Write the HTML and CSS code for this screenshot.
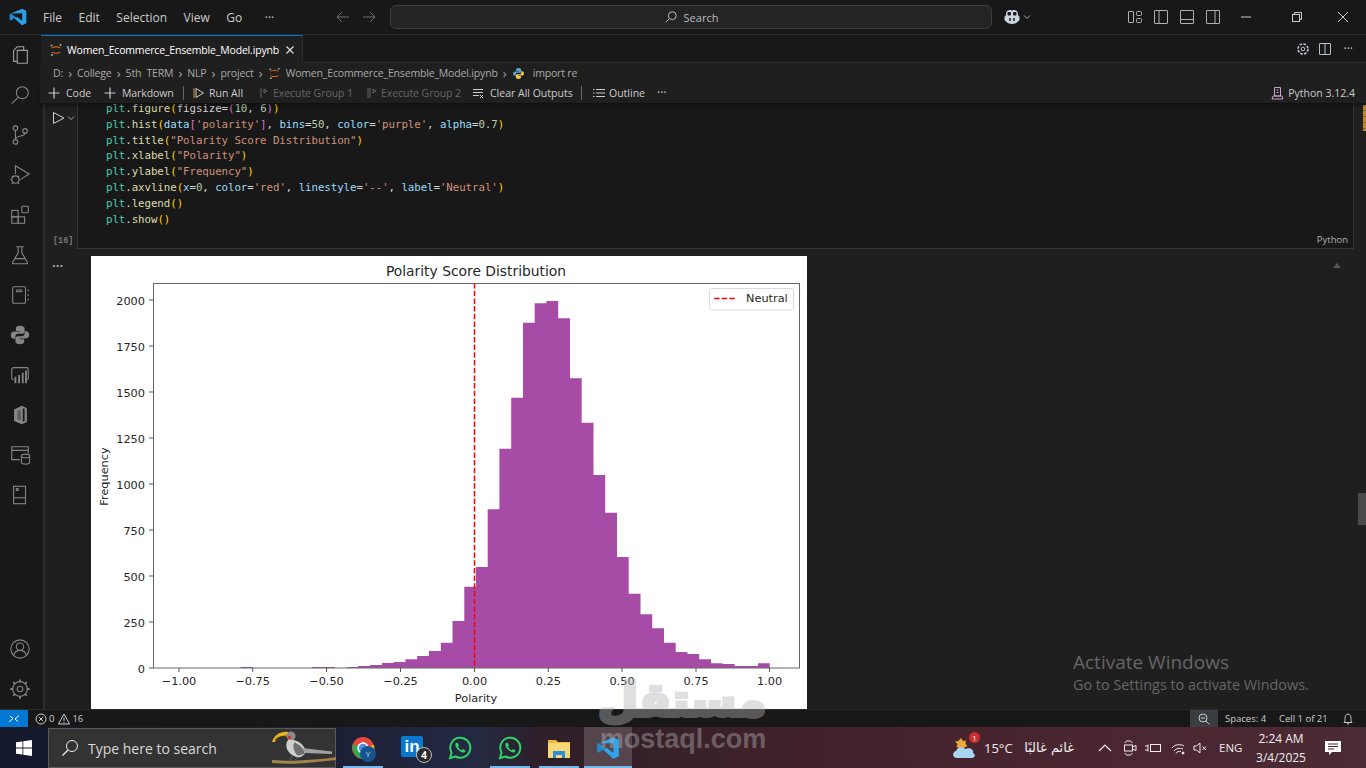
FILE: index.html
```html
<!DOCTYPE html>
<html>
<head>
<title>Women_Ecommerce_Ensemble_Model.ipynb</title>
<link rel="stylesheet" href="styles.css">
</head>
<body>

<!-- title bar -->
<div class="titlebar">
  <svg class="vs-logo" width="20" height="20" viewBox="0 0 24 24"><path fill="#1f8ad2" d="M2 8.500 3.500 7.700 17 18v4L7.500 13.300 3.500 16.300 2 15.500z"/><path fill="#2a9fe8" d="M17 2l5 2.500v15L17 22l-9.500-8.700L11 12l6 4.500v-9L3.500 7.700 2 8.500 17 2z"/></svg>
  <div class="menu"><span>File</span><span>Edit</span><span>Selection</span><span>View</span><span>Go</span><span class="menu-more">···</span></div>
  <div class="nav-arrows">
    <svg width="16" height="16" viewBox="0 0 16 16"><path d="M14 8H2M7 3 2 8l5 5" fill="none" stroke="#6f6f6f"/></svg>
    <svg width="16" height="16" viewBox="0 0 16 16"><path d="M2 8h12M9 3l5 5-5 5" fill="none" stroke="#6f6f6f"/></svg>
  </div>
  <div class="searchbox">
    <svg width="14" height="14" viewBox="0 0 16 16"><circle cx="9.500" cy="6.500" r="4.500" fill="none" stroke="#ccc"/><path d="M6 10l-4 4" stroke="#ccc"/></svg>
    <span>Search</span>
  </div>
  <svg class="copilot" width="18" height="18" viewBox="0 0 18 18"><path fill="#ccd6e0" d="M3 6c0-3 2-4 4-4 1 0 1.600.4 2 1 .4-.6 1-1 2-1 2 0 4 1 4 4v1l1.500 2v3C14 15 11.500 16 9 16s-5-1-7.500-4V9L3 7z"/><rect x="4.500" y="4" width="3.500" height="3.500" rx="1" fill="#181818"/><rect x="10" y="4" width="3.500" height="3.500" rx="1" fill="#181818"/><path d="M7 10v3M11 10v3" stroke="#181818" stroke-width="1.500"/></svg>
  <svg class="copilot-chev" width="10" height="10" viewBox="0 0 10 10"><path d="M2 3.500 5 6.500 8 3.500" fill="none" stroke="#aaa"/></svg>
  <div class="layout-icons">
    <svg width="16" height="16" viewBox="0 0 16 16" fill="none" stroke="#b0b0b0"><rect x="1.500" y="2.500" width="5" height="11" rx=".5"/><rect x="9.500" y="2.500" width="5" height="4" rx="1"/><rect x="9.500" y="9.500" width="5" height="4" rx="1"/></svg>
    <svg width="16" height="16" viewBox="0 0 16 16" fill="none" stroke="#b0b0b0"><rect x="1.500" y="1.500" width="13" height="13" rx=".5"/><path d="M6 2v12"/></svg>
    <svg width="16" height="16" viewBox="0 0 16 16" fill="none" stroke="#b0b0b0"><rect x="1.500" y="1.500" width="13" height="13" rx=".5"/><path d="M2 10.500h12"/></svg>
    <svg width="16" height="16" viewBox="0 0 16 16" fill="none" stroke="#b0b0b0"><rect x="1.500" y="1.500" width="13" height="13" rx=".5"/><path d="M10 2v12"/></svg>
  </div>
  <div class="window-btns">
    <svg width="12" height="12" viewBox="0 0 12 12"><path d="M1 6h10" stroke="#ccc"/></svg>
    <svg width="12" height="12" viewBox="0 0 12 12" fill="none" stroke="#ccc"><rect x="1.500" y="3.500" width="7" height="7"/><path d="M3.500 3.500v-2h7v7h-2"/></svg>
    <svg class="win-close" width="12" height="12" viewBox="0 0 12 12"><path d="M1 1l10 10M11 1 1 11" stroke="#ccc"/></svg>
  </div>
</div>

<div class="workbench">

  <!-- activity bar -->
  <div class="activitybar">
    <div class="act act-on"><svg viewBox="0 0 24 24"><path d="M16 7V3H9L5 7v12h4M9 7h11v14H9z"/></svg></div>
    <div class="act"><svg viewBox="0 0 24 24"><circle cx="14.500" cy="9.500" r="6.500"/><path d="M10 14.500 3 21.500"/></svg></div>
    <div class="act"><svg viewBox="0 0 24 24"><circle cx="7" cy="4.500" r="2.500"/><circle cx="7" cy="19.500" r="2.500"/><circle cx="17.500" cy="7.500" r="2.500"/><path d="M7 7v10M17.500 10c0 4-10.500 2-10.500 7"/></svg></div>
    <div class="act"><svg viewBox="0 0 24 24"><path d="M7 11V2l15 9-9 5.500"/><circle cx="7" cy="17" r="4"/><path d="M3 13l2 1.500M11 13l-2 1.500M1.500 17H3M11 17h1.500M3 22l1.500-2M11 22l-1.500-2"/></svg></div>
    <div class="act"><svg viewBox="0 0 24 24"><rect x="3" y="7" width="7" height="7"/><rect x="3" y="14" width="7" height="7"/><rect x="10" y="14" width="7" height="7"/><rect x="14" y="2.500" width="7" height="7" rx="1"/></svg></div>
    <div class="act"><svg viewBox="0 0 24 24"><path d="M8 3h8M10 3v6.500L4 20c-.5 1 0 1.500 1 1.500h14c1 0 1.500-.5 1-1.500L14 9.500V3M7 16h10"/></svg></div>
    <div class="act"><svg viewBox="0 0 24 24"><rect x="4" y="3" width="14" height="18" rx="1.500"/><rect x="8" y="6.500" width="6" height="2" rx=".5"/><path d="M21 6v2M21 11v2M21 16v2"/></svg></div>
    <div class="act"><svg viewBox="0 0 24 24" class="solid"><path d="M11.900 2C9 2 7.500 3 7.500 5v2.500h4.700v.8H5.500C3.500 8.300 2 9.700 2 12.200 2 14.700 3.300 16 5.200 16H7v-2.400c0-1.700 1.300-2.900 3-2.900h4.600c1.400 0 2.400-1.100 2.400-2.500V5c0-1.800-2-3-5.100-3z"/><path transform="rotate(180 12 12)" d="M11.900 2C9 2 7.500 3 7.500 5v2.500h4.700v.8H5.500C3.500 8.300 2 9.700 2 12.200 2 14.700 3.300 16 5.200 16H7v-2.400c0-1.700 1.300-2.900 3-2.900h4.600c1.400 0 2.400-1.100 2.400-2.500V5c0-1.800-2-3-5.100-3z"/></svg></div>
    <div class="act"><svg viewBox="0 0 24 24"><path d="M5 17c-1 0-2-.5-2-1.500V6c0-1 1-2 2-2h14c1 0 2 1 2 2v9.500c0 1-1 1.500-2 1.500"/><path class="thick" d="M7 21v-7M11 21V12M15 21V9.500M18.500 21V7"/></svg></div>
    <div class="act"><svg viewBox="0 0 24 24" class="solid"><path d="M14 2 19.500 4.500v15L14 22 5.500 18.500V6z"/><path fill="#181818" d="M15 5h2v14h-2z"/><path fill="#181818" d="M13 6 9 7.500v9l4 1.500z" opacity=".35"/></svg></div>
    <div class="act"><svg viewBox="0 0 24 24"><path d="M12 17H3V3h18v7M3 7h18"/><ellipse cx="18" cy="13" rx="4.500" ry="2"/><path d="M13.500 13v7c0 1.200 2 2 4.500 2s4.500-.8 4.500-2v-7"/></svg></div>
    <div class="act"><svg viewBox="0 0 24 24"><rect x="5" y="2.500" width="13" height="19"/><path d="M5 15h13"/><rect x="8" y="5" width="2" height="2"/></svg></div>
    <div class="act act-account"><svg viewBox="0 0 24 24"><circle cx="12" cy="12" r="10"/><circle cx="12" cy="9.500" r="4"/><path d="M5 19c1-3.500 3.500-5.500 7-5.500s6 2 7 5.500"/></svg></div>
    <div class="act"><svg viewBox="0 0 24 24"><circle cx="12" cy="12" r="3"/><circle cx="12" cy="12" r="8"/><path class="thick" d="M12 1.500v3M12 19.500v3M1.500 12h3M19.500 12h3M4.600 4.600l2.100 2.100M17.300 17.300l2.100 2.100M4.600 19.400l2.100-2.100M17.300 6.700l2.100-2.100"/></svg></div>
  </div>

  <!-- editor -->
  <div class="editor">
    <div class="tabs">
      <div class="tab">
        <svg class="jup" width="14" height="14" viewBox="0 0 14 14"><path d="M2 5.500C3 2.500 11 2.500 12 5.500 10 4 4 4 2 5.500zM2 8.500c1 3 9 3 10 0-2 1.500-8 1.500-10 0z" fill="#e66b24"/><circle cx="11.500" cy="2" r="1" fill="#aaa"/><circle cx="2.500" cy="2.500" r="1" fill="#aaa"/><circle cx="3" cy="12" r="1" fill="#aaa"/></svg>
        <span class="tab-name">Women_Ecommerce_Ensemble_Model.ipynb</span>
        <svg width="10" height="10" viewBox="0 0 10 10"><path d="M1.500 1.500l7 7M8.500 1.500l-7 7" stroke="#ddd" stroke-width="1.200"/></svg>
      </div>
      <div class="tab-actions">
        <svg width="14" height="14" viewBox="0 0 14 14" fill="none" stroke="#b6c2cc"><circle cx="7" cy="7" r="1.800"/><circle cx="7" cy="7" r="5" stroke-dasharray="2.600 1.300" stroke-width="1.600"/></svg>
        <svg class="split-ic" width="14" height="14" viewBox="0 0 14 14" fill="none" stroke="#b6c2cc"><rect x="1.500" y="1.500" width="11" height="11" rx=".5"/><path d="M7 2v10"/></svg>
        <span class="dots">···</span>
      </div>
    </div>

    <div class="breadcrumbs">
      <span>D:</span><i>›</i><span>College</span><i>›</i><span class="pre">5th  TERM</span><i>›</i><span>NLP</span><i>›</i><span>project</span><i>›</i>
      <svg class="jup crumb-jup" width="13" height="13" viewBox="0 0 14 14"><path d="M2 5.500C3 2.500 11 2.500 12 5.500 10 4 4 4 2 5.500zM2 8.500c1 3 9 3 10 0-2 1.500-8 1.500-10 0z" fill="#e66b24"/><circle cx="11.500" cy="2" r="1" fill="#aaa"/><circle cx="2.500" cy="2.500" r="1" fill="#aaa"/><circle cx="3" cy="12" r="1" fill="#aaa"/></svg>
      <span>Women_Ecommerce_Ensemble_Model.ipynb</span><i>›</i>
      <svg width="13" height="13" viewBox="0 0 24 24"><path fill="#5c9fd6" d="M11.900 2C9 2 7.500 3 7.500 5v2.500h4.700v.8H5.500C3.500 8.300 2 9.700 2 12.200 2 14.700 3.300 16 5.200 16H7v-2.400c0-1.700 1.300-2.900 3-2.900h4.600c1.400 0 2.400-1.100 2.400-2.500V5c0-1.800-2-3-5.100-3z"/><path fill="#e8c84a" transform="rotate(180 12 12)" d="M11.900 2C9 2 7.500 3 7.500 5v2.500h4.700v.8H5.500C3.500 8.300 2 9.700 2 12.200 2 14.700 3.300 16 5.200 16H7v-2.400c0-1.700 1.300-2.900 3-2.900h4.600c1.400 0 2.400-1.100 2.400-2.500V5c0-1.800-2-3-5.100-3z"/></svg>
      <span class="crumb-last">import re</span>
    </div>

    <div class="toolbar">
      <div class="tool w-code"><svg width="12" height="12" viewBox="0 0 12 12"><path d="M6 .5v11M.5 6h11" stroke="#ccc" stroke-width="1.200"/></svg><span>Code</span></div>
      <div class="tool w-md"><svg width="12" height="12" viewBox="0 0 12 12"><path d="M6 .5v11M.5 6h11" stroke="#ccc" stroke-width="1.200"/></svg><span>Markdown</span></div>
      <div class="tool-sep"></div>
      <div class="tool w-run"><svg width="12" height="12" viewBox="0 0 12 12" fill="none"><path d="M1 1v10" stroke="#c79a3e"/><path d="M3 1.500 10.500 6 3 10.500z" stroke="#ccc"/></svg><span>Run All</span></div>
      <div class="tool tool-off w-grp1"><svg width="10" height="12" viewBox="0 0 10 12" fill="none" stroke="#666"><path d="M2 1v10M5 2l3 2-3 2z"/></svg><span>Execute Group 1</span></div>
      <div class="tool tool-off w-grp2"><svg width="10" height="12" viewBox="0 0 10 12" fill="none" stroke="#666"><path d="M1 1v10M3 1v10M6 2l3 2-3 2z"/></svg><span>Execute Group 2</span></div>
      <div class="tool w-clear"><svg width="12" height="12" viewBox="0 0 12 12" fill="none" stroke="#ccc"><path d="M1 2.500h10M1 5.500h10M1 8.500h6M8 8l3 3M11 8l-3 3"/></svg><span>Clear All Outputs</span></div>
      <div class="tool-sep"></div>
      <div class="tool w-outline"><svg width="12" height="12" viewBox="0 0 12 12" stroke="#ccc"><path d="M3 2.500h9M3 6h9M3 9.500h9M0 2.500h1.500M0 6h1.500M0 9.500h1.500"/></svg><span>Outline</span></div>
      <span class="dots">···</span>
      <div class="kernel">
        <svg width="13" height="14" viewBox="0 0 13 14" fill="none" stroke="#c9a0c8"><path d="M3.500 1.500h6V10h-6zM1 13h11l-1-3H2zM5.500 4h2M5.500 6.500h2"/></svg>
        <span>Python 3.12.4</span>
      </div>
    </div>

    <div class="notebook">
      <div class="nb-rail"></div>
      <div class="nb-cells">
        <div class="cell-row">
          <div class="cell-gutter">
            <div class="run-btn">
              <svg width="14" height="14" viewBox="0 0 14 14" fill="none"><path d="M1.500 1.500 12 7 1.500 12.500z" stroke="#ccc"/></svg>
              <svg width="8" height="8" viewBox="0 0 8 8" fill="none"><path d="M1 2.500 4 5.500 7 2.500" stroke="#aaa"/></svg>
            </div>
            <div class="exec-count">[16]</div>
          </div>
          <div class="code-cell">
<pre class="code"><b>plt</b>.<u>figure</u><em>(</em>figsize=<q>(</q><n>10</n>, <n>6</n><q>)</q><em>)</em>
<b>plt</b>.<u>hist</u><em>(</em><v>data</v><q>[</q><s>'polarity'</s><q>]</q>, <v>bins</v>=<n>50</n>, <v>color</v>=<s>'purple'</s>, <v>alpha</v>=<n>0.7</n><em>)</em>
<b>plt</b>.<u>title</u><em>(</em><s>"Polarity Score Distribution"</s><em>)</em>
<b>plt</b>.<u>xlabel</u><em>(</em><s>"Polarity"</s><em>)</em>
<b>plt</b>.<u>ylabel</u><em>(</em><s>"Frequency"</s><em>)</em>
<b>plt</b>.<u>axvline</u><em>(</em><v>x</v>=<n>0</n>, <v>color</v>=<s>'red'</s>, <v>linestyle</v>=<s>'--'</s>, <v>label</v>=<s>'Neutral'</s><em>)</em>
<b>plt</b>.<u>legend</u><em>()</em>
<b>plt</b>.<u>show</u><em>()</em></pre>
            <div class="cell-lang">Python</div>
          </div>
        </div>
        <div class="output-row">
          <div class="output-dots">···</div>
          <svg class="plot" width="716" height="453" viewBox="91 256 716 453">
            <rect x="91" y="256" width="716" height="453" fill="#fff"/>
            <path fill="#a64ca6" d="M347 668V667H358V666H370V665H382V663H393.700V662H405.500V659.300H417.200V656H429V651H440.800V642.700H452.500V621H464.300V586.700H476V567H487.700V509.300H499.400V448.700H511.200V397.700H523V322.700H534.700V303.300H546.400V301H558.200V318.300H570V378.300H581.700V422.700H593.500V475H605.200V512.700H617V557H628.700V593.700H640.500V614.300H652.200V628.300H664V642.700H675.700V652H687.500V654H699.200V659.300H711V663.300H722.700V664H734.500V666H758V663.300H769.700V668Z"/>
            <path fill="#a64ca6" d="M240.500 668V667H252.500V668ZM312 668V667H335V668Z"/>
            <path d="M474.500 283V668" stroke="#f00" stroke-width="1.500" stroke-dasharray="5.500 2.200"/>
            <rect x="153.500" y="283.500" width="646" height="384.500" fill="none" stroke="#666"/>
            <path stroke="#555" d="M149 668h4M149 622h4M149 576h4M149 530h4M149 484h4M149 438h4M149 392h4M149 346h4M149 300h4M179 668v4M252.700 668v4M326.500 668v4M400.500 668v4M474.500 668v4M548.300 668v4M622 668v4M696 668v4M769.500 668v4"/>
            <g class="tick-y">
              <text x="145" y="672.500">0</text><text x="145" y="626.500">250</text><text x="145" y="580.500">500</text><text x="145" y="534.500">750</text><text x="145" y="488.500">1000</text><text x="145" y="442.500">1250</text><text x="145" y="396.500">1500</text><text x="145" y="350.500">1750</text><text x="145" y="304.500">2000</text>
            </g>
            <g class="tick-x">
              <text x="179" y="685">−1.00</text><text x="252.700" y="685">−0.75</text><text x="326.500" y="685">−0.50</text><text x="400.500" y="685">−0.25</text><text x="474.500" y="685">0.00</text><text x="548.300" y="685">0.25</text><text x="622" y="685">0.50</text><text x="696" y="685">0.75</text><text x="769.500" y="685">1.00</text>
            </g>
            <text class="plot-title" x="476" y="275.500">Polarity Score Distribution</text>
            <text class="tick-x-label" x="476" y="702">Polarity</text>
            <text class="tick-y-label" transform="translate(108 476.500) rotate(-90)">Frequency</text>
            <rect x="709.500" y="288.500" width="84" height="21.500" rx="2" fill="#fff" fill-opacity=".8" stroke="#dcdcdc"/>
            <path d="M714 298.500h23" stroke="#f00" stroke-width="1.500" stroke-dasharray="5.500 2.200"/>
            <text class="legend-text" x="746" y="301.500">Neutral</text>
          </svg>
          <svg class="collapse-up" width="10" height="6" viewBox="0 0 10 6"><path d="M5 0l4 5H1z" fill="#555"/></svg>
        </div>
      </div>
      <div class="overview-marks"></div>
      <div class="scroll-thumb"></div>
      <div class="activate">
        <div class="activate-big">Activate Windows</div>
        <div class="activate-small">Go to Settings to activate Windows.</div>
      </div>
    </div>
  </div>
</div>

<!-- status bar -->
<div class="statusbar">
  <div class="remote"><svg width="14" height="14" viewBox="0 0 14 14" fill="none" stroke="#fff"><path d="M2 10l4-3.500L3 4M12 3.500 8 7l3 2.500"/></svg></div>
  <div class="status-problems">
    <svg width="12" height="12" viewBox="0 0 12 12" fill="none" stroke="#ccc"><circle cx="6" cy="6" r="5"/><path d="M4 4l4 4M8 4 4 8"/></svg><span>0</span>
    <svg class="warn" width="12" height="12" viewBox="0 0 12 12" fill="none" stroke="#ccc"><path d="M6 1 11.500 11H.5zM6 4.500V8M6 9v1"/></svg><span>16</span>
  </div>
  <div class="status-right">
    <div class="zoom-box"><svg width="12" height="12" viewBox="0 0 12 12" fill="none" stroke="#ccc"><circle cx="5" cy="5" r="4"/><path d="M8 8l3.500 3.500M3 5h4"/></svg></div>
    <span class="st-spaces">Spaces: 4</span>
    <span class="st-cell">Cell 1 of 21</span>
    <svg width="12" height="12" viewBox="0 0 12 12" fill="none" stroke="#ccc"><path d="M2 9.500c1-1 1-2.500 1-4C3 3 4.300 1 6 1s3 2 3 4.500c0 1.500 0 3 1 4zM5 11h2"/></svg>
  </div>
</div>

<!-- taskbar -->
<div class="taskbar">
  <div class="start"><svg width="16" height="16" viewBox="0 0 16 16" fill="#fff"><path d="M0 2.300 6.500 1.400V7.600H0zM7.300 1.300 16 0V7.600H7.300zM0 8.400h6.500v6.200L0 13.700zM7.300 8.400H16V16l-8.700-1.200z"/></svg></div>
  <div class="task-search">
    <svg width="18" height="18" viewBox="0 0 18 18" fill="none" stroke="#eee"><circle cx="11" cy="7" r="5.500"/><path d="M7 11l-5.500 5.500" stroke-width="1.300"/></svg>
    <span>Type here to search</span>
    <svg class="bird" width="66" height="39" viewBox="0 0 66 39">
      <path d="M2 31c14 1 24 1 34 0s20-1 30-3v3c-10 1-20 2-30 3S14 35 2 34z" fill="#a5834c"/>
      <path d="M2 13C4 6 11 2 18 3l1 5C12 6 7 8 5 13z" fill="#e9b420"/>
      <path d="M5 11c3-3 7-4 12-4" stroke="#4a3410" fill="none"/>
      <circle cx="21" cy="7" r="4.500" fill="#8b8b8b"/>
      <circle cx="19.500" cy="8.500" r="1.800" fill="#d03a2a"/>
      <path d="M18 11c-4 5-1 14 8 17 5 1 9-1 9-7 0-5-9-12-17-10z" fill="#cfcfcf"/>
      <path d="M24 13c5 2 10 6 11 12l-7 2c-4-3-6-9-4-14z" fill="#6f6f6f" stroke="#d5d5d5" stroke-dasharray="1 1.500"/>
      <path d="M32 19 62 22.500V25L35 24z" fill="#a2a2a2"/>
      <path d="M22 26l-2 6M27 28l-2 4" stroke="#555" stroke-width="1.200"/>
    </svg>
  </div>
  <div class="task-apps">
    <div class="app app-open w-40">
      <svg width="24" height="24" viewBox="0 0 24 24"><circle cx="12" cy="12" r="11" fill="#e8453c"/><path d="M12 12 3 6.500A11 11 0 0 0 12 23z" fill="#32a853" transform="rotate(-10 12 12)"/><path d="M12 12 23 9A11 11 0 0 1 12 23z" fill="#f9bc15"/><circle cx="12" cy="12" r="5" fill="#4a90e2" stroke="#fff" stroke-width="1.500"/></svg>
      <span class="avatar">Y</span>
    </div>
    <div class="app w-linked">
      <span class="linkedin">in</span><span class="count">4</span>
    </div>
    <div class="app w-wa"><svg width="24" height="24" viewBox="0 0 24 24"><use href="#wa"/></svg></div>
    <div class="app app-open w-40 wa-second">
      <svg width="24" height="24" viewBox="0 0 24 24"><g id="wa"><path d="M2 22l1.500-5.500A10 10 0 1 1 7.500 20.500z" fill="none" stroke="#2fd366" stroke-width="2"/><path d="M8 7c-1 1-1 3 1 5.500s5 4.500 7 4c1.500-.4 1.500-2 1-2.500l-2.200-1-1 1.200c-1.500-.5-3-2-3.800-3.800l1-1L10 7.200C9.500 6.500 8.600 6.500 8 7z" fill="#2fd366"/></g></svg>
    </div>
    <div class="app app-open w-40 folder-app">
      <svg width="24" height="22" viewBox="0 0 24 22"><path d="M1 3h8l2 2h12v16H1z" fill="#e8b93a"/><path d="M1 6h22v15H1z" fill="#f8d775"/><path d="M6 21v-5h12v5h-3v-3H9v3z" fill="#2a8fdc"/><path d="M6 14h12v2H6z" fill="#2a8fdc"/></svg>
    </div>
    <div class="app app-open app-active">
      <svg width="26" height="26" viewBox="0 0 24 24"><path fill="#1f8ad2" d="M2 8.500 3.500 7.700 17 18v4L7.500 13.300 3.500 16.300 2 15.500z"/><path fill="#2fa5ee" d="M17 2l5 2.500v15L17 22l-9.500-8.700L11 12l6 4.500v-9L3.500 7.700 2 8.500 17 2z"/></svg>
    </div>
  </div>
  <div class="tray">
    <div class="weather">
      <svg width="26" height="26" viewBox="0 0 26 26"><path d="M9 3l2 3 3-.5-.5 3.500 2 2-6 3-5-2 1-3-2.500-2.500 3.500-.5z" fill="#e9a93a"/><path d="M5 23c-5 0-5-6-1-7 1-4 7-5 9-2 4-2 9 0 8 4 3 1 2 5-1 5z" fill="#a9d4f2"/></svg>
      <span class="weather-badge">1</span>
    </div>
    <span class="temp">15°C</span>
    <span class="cond" lang="ar" dir="rtl">غائم غالبًا</span>
    <svg class="tr-up" width="14" height="14" viewBox="0 0 14 14"><path d="M1 10l6-6 6 6" fill="none" stroke="#eee" stroke-width="1.200"/></svg>
    <svg class="tr-cam" width="14" height="16" viewBox="0 0 14 16" fill="none" stroke="#eee"><path d="M2 3c0-1 1-2 2-2h3c1 0 2 1 2 2M2 13c0 1 1 2 2 2h3c1 0 2-1 2-2"/><rect x="1.500" y="5" width="8" height="6"/><path d="M9.500 7 13 5.500v5L9.500 9"/></svg>
    <svg class="tr-bat" width="16" height="10" viewBox="0 0 16 10" fill="none" stroke="#eee"><rect x="5.500" y="1.500" width="10" height="7"/><path d="M0 3h3M0 7h3M3 1.500v7"/></svg>
    <svg class="tr-wifi" width="14" height="14" viewBox="0 0 14 14" fill="none" stroke="#eee"><path d="M1 7c3-4 9-4 12-2M3 10c2-3 6-3 9-2M5 12.500c1-2 3-2.500 5-2"/><circle cx="12" cy="12" r="1" fill="#eee"/></svg>
    <svg class="tr-vol" width="14" height="14" viewBox="0 0 14 14" fill="none" stroke="#eee"><path d="M1 5h2.500L7 2v10L3.500 9H1zM9.500 5.500l3.500 3.500M13 5.500 9.500 9"/></svg>
    <span class="lang">ENG</span>
    <div class="clock"><div>2:24 AM</div><div>3/4/2025</div></div>
    <svg class="tr-note" width="16" height="16" viewBox="0 0 16 16"><path d="M0 1h16v11H7l-3 3v-3H0z" fill="#fff"/><path d="M3 4h10M3 6.500h10M3 9h6" stroke="#4a2530"/></svg>
  </div>
</div>

<!-- site watermark -->
<div class="wm-ar" lang="ar" dir="rtl">مستقل</div>
<div class="wm-en">mostaql.com</div>

</body>
</html>
```

FILE: styles.css
```css
* {
  box-sizing: border-box;
}

html, body {
  margin: 0;
  padding: 0;
  height: 100%;
  overflow: hidden;
}

body {
  display: flex;
  flex-direction: column;
  height: 768px;
  font-family: "Open Sans", "Noto Sans", sans-serif;
  font-size: 11px;
  color: #ccc;
  background-color: #1f1f1f;
  position: relative;
}

svg {
  display: block;
  flex: none;
}

/* title bar */
.titlebar {
  height: 35px;
  flex: none;
  display: flex;
  align-items: center;
  background-color: #181818;
  border-bottom: 1px solid #2b2b2b;
}

.vs-logo {
  margin-left: 8px;
}

.menu {
  display: flex;
  gap: 16.500px;
  margin-left: 15px;
  font-size: 12px;
  width: 300px;
}

.menu-more {
  margin-left: 6px;
}

.nav-arrows {
  display: flex;
  gap: 10px;
  margin-left: -8px;
}

.searchbox {
  width: 602px;
  height: 24px;
  margin-left: 13px;
  background-color: #242424;
  border: 1px solid #3c3c3c;
  border-radius: 6px;
  display: flex;
  align-items: center;
  justify-content: center;
  gap: 6px;
  color: #bbb;
}

.copilot {
  margin-left: 11px;
}

.copilot-chev {
  margin-left: 1px;
}

.layout-icons {
  display: flex;
  gap: 10px;
  margin-left: 95px;
}

.window-btns {
  display: flex;
  margin-left: 19px;
  gap: 39px;
}

.win-close {
  margin-left: -5px;
}

/* activity bar */
.workbench {
  flex: 1;
  display: flex;
  min-height: 0;
}

.activitybar {
  width: 40px;
  flex: none;
  display: flex;
  flex-direction: column;
  background-color: #181818;
}

.act {
  height: 40px;
  display: flex;
  align-items: center;
  justify-content: center;
}

.act svg {
  width: 22px;
  height: 22px;
  fill: none;
  stroke: #858585;
  stroke-width: 1.200;
}

.act-on svg {
  stroke: #a0a0a0;
}

.act svg.solid {
  fill: #858585;
  stroke: none;
}

.act svg .thick {
  stroke-width: 2;
}

.act-account {
  margin-top: auto;
}

/* tabs */
.editor {
  flex: 1;
  min-width: 0;
  display: flex;
  flex-direction: column;
  position: relative;
}

.tabs {
  height: 28px;
  flex: none;
  display: flex;
  background-color: #181818;
  border-bottom: 1px solid #2b2b2b;
  padding-left: 1px;
}

.tab {
  width: 262px;
  height: 28px;
  display: flex;
  align-items: center;
  padding-left: 8px;
  gap: 4px;
  background-color: #1f1f1f;
  border-top: 1px solid #0078d4;
  border-right: 1px solid #2b2b2b;
  color: #fff;
}

.tab-name {
  width: 212px;
  margin-right: 2px;
  white-space: nowrap;
  font-size: 10.500px;
  letter-spacing: -0.170px;
}

.tab-actions {
  margin-left: auto;
  display: flex;
  align-items: center;
  gap: 8px;
  padding-right: 13px;
}

.split-ic {
  margin-right: 4px;
}

.dots {
  color: #ccc;
  font-size: 12px;
  letter-spacing: 0;
  line-height: 1;
}

/* breadcrumbs */
.breadcrumbs {
  height: 22px;
  flex: none;
  display: flex;
  align-items: center;
  padding: 0 0 2px 13px;
  color: #a9a9a9;
  font-size: 10.500px;
  letter-spacing: -0.170px;
}

.breadcrumbs i {
  font-style: normal;
  width: 14px;
  text-align: center;
  font-size: 13px;
  line-height: 1;
}

.breadcrumbs .pre {
  white-space: pre;
}

.crumb-jup {
  margin-right: 5px;
}

.crumb-last {
  margin-left: 8px;
}

/* notebook toolbar */
.toolbar {
  height: 18px;
  flex: none;
  display: flex;
  align-items: center;
  padding: 0 11px 2px 8px;
  color: #ccc;
  font-size: 10.500px;
  box-shadow: 0 3px 4px rgba(0, 0, 0, 0.35);
  position: relative;
  z-index: 2;
}

.tool {
  display: flex;
  align-items: center;
  gap: 6px;
  flex: none;
  white-space: nowrap;
}

.tool-off {
  color: #666;
  gap: 4px;
  letter-spacing: -0.060px;
}

.w-code { width: 56px; }
.w-md { width: 79px; letter-spacing: -0.100px; }
.w-run { width: 66px; margin-left: 9px; gap: 4px; }
.w-grp1 { width: 108px; }
.w-grp2 { width: 105px; }
.w-clear { width: 109px; }
.w-outline { width: 64px; margin-left: 11px; gap: 4px; }

.tool-sep {
  width: 1px;
  height: 14px;
  background-color: #666;
  flex: none;
}

.kernel {
  margin-left: auto;
  display: flex;
  align-items: center;
  gap: 4px;
}

/* notebook */
.notebook {
  flex: 1;
  min-height: 0;
  display: flex;
  position: relative;
  overflow: hidden;
}

.nb-rail {
  width: 5px;
  flex: none;
  border-left: 3px solid #181818;
  border-right: 2px solid #2d2d2d;
}

.nb-cells {
  flex: 1;
  min-width: 0;
}

.cell-row {
  display: flex;
  height: 146px;
}

.cell-gutter {
  width: 32px;
  flex: none;
  position: relative;
  padding: 8px 0 3px 7px;
  display: flex;
  flex-direction: column;
  justify-content: space-between;
}

.run-btn {
  display: flex;
  align-items: center;
  gap: 1px;
}

.exec-count {
  font-family: "Liberation Mono", monospace;
  font-size: 8.500px;
  font-weight: bold;
  color: #777;
  padding-left: 1px;
}

.code-cell {
  width: 1277px;
  flex: none;
  background-color: #181818;
  border-left: 1px solid #333;
  border-right: 1px solid #333;
  border-bottom: 1px solid #333;
  position: relative;
  padding-left: 28px;
}

.code {
  margin: -2px 0 0;
  font-family: "DejaVu Sans Mono", monospace;
  font-size: 10.800px;
  letter-spacing: -0.080px;
  line-height: 15.800px;
  color: #d4d4d4;
}

.code b { color: #4ec9b0; font-weight: normal; }
.code u { color: #dcdcaa; text-decoration: none; }
.code em { color: #ffd700; font-style: normal; }
.code q { color: #da70d6; quotes: none; }
.code s { color: #ce9178; text-decoration: none; }
.code n { color: #b5cea8; }
.code v { color: #9cdcfe; }

.cell-lang {
  position: absolute;
  right: 5px;
  bottom: 2px;
  font-size: 9.500px;
  color: #b0b0b0;
}

.output-row {
  display: flex;
  padding-top: 7px;
}

.output-dots {
  width: 46px;
  padding: 2px 0 0 7px;
  font-size: 13px;
  font-weight: bold;
  line-height: 14px;
  color: #aaa;
}

.plot {
  overflow: hidden;
  font-family: "DejaVu Sans", sans-serif;
}

.tick-y text {
  font-size: 11.300px;
  fill: #262626;
  text-anchor: end;
}

.tick-x text {
  font-size: 11.300px;
  fill: #262626;
  text-anchor: middle;
}

.plot-title {
  font-size: 13.850px;
  fill: #262626;
  text-anchor: middle;
}

.tick-x-label,
.tick-y-label {
  font-size: 11.300px;
  fill: #262626;
  text-anchor: middle;
}

.legend-text {
  font-size: 11.300px;
  fill: #262626;
}

.collapse-up {
  position: absolute;
  left: 1292px;
  top: 160px;
}

.overview-marks {
  position: absolute;
  right: 0;
  top: 2px;
  width: 3px;
  height: 26px;
  background: repeating-linear-gradient(180deg, #c08a1e 0, #c08a1e 5px, #8a6418 5px, #8a6418 6px);
}

.scroll-thumb {
  position: absolute;
  right: 0;
  top: 390px;
  width: 8px;
  height: 32px;
  background-color: #4a4a4a;
}

.activate {
  position: absolute;
  left: 1033px;
  top: 547px;
  color: #666;
}

.activate-big {
  font-size: 19px;
  line-height: 24px;
}

.activate-small {
  font-size: 14.400px;
  line-height: 22px;
}

/* status bar */
.statusbar {
  height: 18px;
  flex: none;
  display: flex;
  align-items: center;
  background-color: #181818;
  border-top: 1px solid #2b2b2b;
  font-size: 9.500px;
  color: #ccc;
}

.remote {
  width: 28px;
  height: 18px;
  background-color: #0078d4;
  display: flex;
  align-items: center;
  justify-content: center;
}

.status-problems {
  display: flex;
  align-items: center;
  gap: 2px;
  margin-left: 7px;
}

.warn {
  margin-left: 2px;
}

.status-right {
  margin-left: auto;
  display: flex;
  align-items: center;
  padding-right: 12px;
}

.zoom-box {
  width: 28px;
  height: 17px;
  background-color: #3a3d41;
  display: flex;
  align-items: center;
  justify-content: center;
}

.st-spaces {
  margin-left: 7px;
  width: 54px;
}

.st-cell {
  width: 63px;
}

/* taskbar */
.taskbar {
  height: 41px;
  flex: none;
  display: flex;
  align-items: center;
  background: linear-gradient(90deg, #15192d 0, #1b2036 340px, #242a42 480px, #2e1f28 540px, #41222a 800px, #4b2630 1100px, #4a2a33 1366px);
  color: #eee;
}

.start {
  width: 48px;
  display: flex;
  justify-content: center;
}

.task-search {
  width: 288px;
  height: 40px;
  margin-top: 1px;
  background-color: #333;
  border: 1px solid #5a5a5a;
  display: flex;
  align-items: center;
  padding-left: 12px;
  font-size: 14px;
  color: #d8d8d8;
  position: relative;
}

.task-search span {
  margin-left: 9px;
}

.bird {
  position: absolute;
  right: -1px;
  top: 0;
}

.task-apps {
  display: flex;
  align-items: stretch;
  height: 41px;
  margin-left: 7px;
}

.app {
  position: relative;
  display: flex;
  align-items: center;
  justify-content: center;
}

.w-40 { width: 40px; }
.w-linked { width: 48px; margin-left: 5px; justify-content: flex-start; padding-left: 13px; }
.w-wa { width: 48px; }
.wa-second { margin-left: 6px; }
.folder-app { margin-left: 9px; }

.app-open::after {
  content: "";
  position: absolute;
  left: 0;
  right: 0;
  bottom: 0;
  height: 2px;
  background-color: #76b9ed;
}

.app-active {
  width: 48px;
  margin-left: 5px;
  background-color: rgba(255, 255, 255, 0.17);
}

.avatar {
  position: absolute;
  left: 17px;
  top: 19px;
  width: 16px;
  height: 16px;
  border-radius: 50%;
  background-color: #14558f;
  color: #ddd;
  font-size: 8px;
  line-height: 16px;
  text-align: center;
}

.linkedin {
  width: 22px;
  height: 21px;
  margin-top: -2px;
  background-color: #0a78cd;
  border-radius: 2px;
  color: #fff;
  font-family: "Liberation Sans", sans-serif;
  font-weight: bold;
  font-size: 17px;
  line-height: 21px;
  text-align: center;
}

.count {
  position: absolute;
  left: 28px;
  top: 20px;
  width: 16px;
  height: 16px;
  border-radius: 50%;
  background-color: #2a2a2a;
  border: 1px solid #bbb;
  color: #fff;
  font-size: 10px;
  font-weight: bold;
  line-height: 14px;
  text-align: center;
}

.tray {
  margin-left: auto;
  display: flex;
  align-items: center;
  font-size: 12px;
  color: #eee;
}

.weather {
  position: relative;
  margin-right: 6px;
}

.weather-badge {
  position: absolute;
  right: -2px;
  top: -3px;
  width: 11px;
  height: 11px;
  border-radius: 50%;
  background-color: #c9302c;
  color: #fff;
  font-size: 8px;
  line-height: 11px;
  text-align: center;
}

.temp {
  width: 38px;
  font-size: 13px;
}

.cond {
  width: 52px;
  font-family: "DejaVu Sans", "Noto Sans", sans-serif;
  font-size: 13px;
  white-space: nowrap;
}

.tr-up { margin-left: 24px; }
.tr-cam { margin-left: 11px; }
.tr-bat { margin-left: 8px; }
.tr-wifi { margin-left: 10px; }
.tr-vol { margin-left: 8px; }

.lang {
  margin-left: 12px;
  width: 24px;
  font-size: 11.500px;
}

.clock {
  width: 70px;
  margin-left: 3px;
  text-align: center;
  line-height: 19px;
  font-size: 12px;
}

.tr-note {
  margin-left: 9px;
  margin-right: 25px;
}

/* site watermark, lies over the whole page */
.wm-ar {
  position: absolute;
  left: 592px;
  top: 660px;
  width: 180px;
  text-align: center;
  font-family: "DejaVu Sans", sans-serif;
  font-weight: bold;
  font-size: 46px;
  line-height: 80px;
  color: #b4b4b4;
  -webkit-text-stroke: 4px #b4b4b4;
  opacity: 0.41;
  pointer-events: none;
}

.wm-en {
  position: absolute;
  left: 598px;
  top: 724px;
  width: 170px;
  text-align: center;
  font-family: "Liberation Sans", sans-serif;
  font-weight: bold;
  font-size: 27px;
  line-height: 30px;
  color: #b4b4b4;
  opacity: 0.41;
  pointer-events: none;
}
```
